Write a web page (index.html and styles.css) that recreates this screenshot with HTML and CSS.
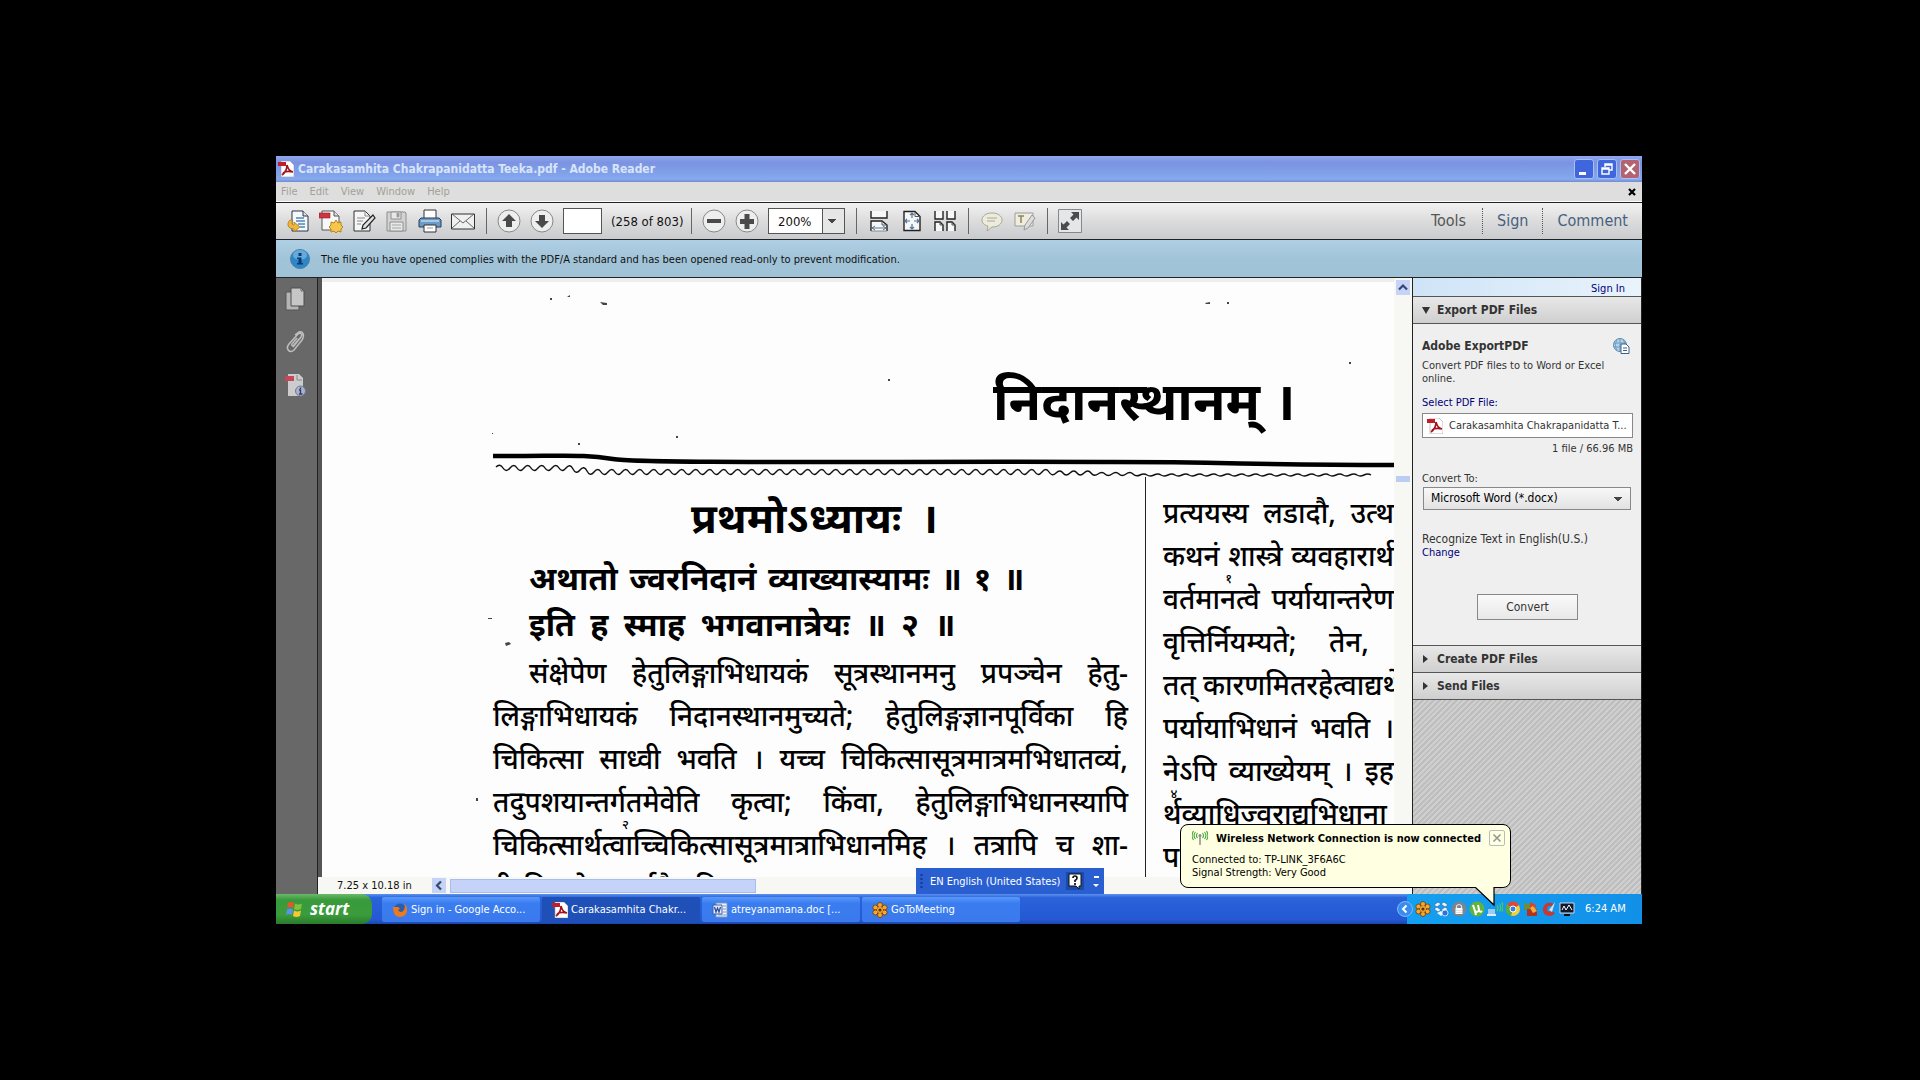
FILE: index.html
```html
<!DOCTYPE html>
<html lang="en">
<head>
<meta charset="utf-8">
<title>Carakasamhita Chakrapanidatta Teeka.pdf - Adobe Reader</title>
<link rel="stylesheet" href="styles.css">
</head>
<body>
<svg class="defs" aria-hidden="true">
  <symbol id="pdf" viewBox="0 0 16 16">
    <path d="M3 0h9l4 4v12H3z" fill="#fff" stroke="#999" stroke-width=".6"/>
    <path d="M0 1h8v4H0z" fill="#c11e2b"/>
    <path d="M9 4c1 4 2 6 6 7M9 4c0 4-1 7-5 10M5 12c3-2 6-2 10-1" fill="none" stroke="#a3121d" stroke-width="1.7"/>
  </symbol>
  <symbol id="flower" viewBox="0 0 16 16">
    <g fill="#f9a72b" stroke="#6b3a08" stroke-width=".8"><circle cx="8" cy="3" r="2.5"/><circle cx="8" cy="13" r="2.5"/><circle cx="3.4" cy="5.5" r="2.5"/><circle cx="12.6" cy="5.5" r="2.5"/><circle cx="3.4" cy="10.5" r="2.5"/><circle cx="12.6" cy="10.5" r="2.5"/></g>
    <circle cx="8" cy="8" r="3" fill="#f9a72b"/><circle cx="8" cy="8" r="1.6" fill="#5a2d05"/>
  </symbol>
</svg>
<div class="screen">
  <header class="titlebar">
    <svg class="i16"><use href="#pdf"/></svg>
    <h1>Carakasamhita Chakrapanidatta Teeka.pdf - Adobe Reader</h1>
    <div class="winbtns">
      <button aria-label="Minimize"><svg viewBox="0 0 18 18"><path d="M4 12h7v3H4z" fill="#fff"/></svg></button>
      <button aria-label="Restore"><svg viewBox="0 0 18 18"><path d="M7 7V4h7v6h-3M4 8h7v6H4zM4 9h7M7 5h7" fill="none" stroke="#fff" stroke-width="1.4"/></svg></button>
      <button class="close" aria-label="Close"><svg viewBox="0 0 18 18"><path d="M4 4l10 10M14 4L4 14" stroke="#fff" stroke-width="2.4"/></svg></button>
    </div>
  </header>
  <nav class="menubar">
    <button>File</button><button>Edit</button><button>View</button><button>Window</button><button>Help</button>
    <button class="docclose" aria-label="Close document"><svg viewBox="0 0 8 8"><path d="M1 1l6 6M7 1L1 7" stroke="#000" stroke-width="2.2"/></svg></button>
  </nav>
  <div class="toolbar">
    <button aria-label="Open"><svg viewBox="0 0 24 24"><path d="M6 2h11l5 5v15H6z" fill="#f6f9fc" stroke="#2d3743"/><path d="M17 2v5h5" fill="#dce4ec" stroke="#2d3743"/><path d="M10 9h8M10 12h9M12 15h7M14 18h5" stroke="#4d86b8" stroke-width="1.4"/><path d="M4 11c-4 4-2 9 4 9v3l6-5-6-5v3c-2 0-3-2-1-5z" fill="#f0b73c" stroke="#a8761a" stroke-width=".8"/></svg></button>
    <button aria-label="Create PDF"><svg viewBox="0 0 24 24"><path d="M3 2h12l5 5v14H3z" fill="#f8f8f8" stroke="#555"/><path d="M15 2v5h5" fill="#ddd" stroke="#555"/><path d="M0 4h11v5H0z" fill="#cf3540" stroke="#8e1c25" stroke-width=".6"/><path d="M17 11l2 3 3-1v3l2 2-2 2v3l-3-1-2 2-2-2-3 1v-3l-2-2 2-2v-3l3 1z" fill="#f6c74c" stroke="#b8831e"/></svg></button>
    <button aria-label="Edit"><svg viewBox="0 0 24 24"><path d="M2 2h11l5 5v15H2z" fill="#f6f6f6" stroke="#333"/><path d="M13 2v5h5M5 9h8M5 12h6M5 15h4" fill="none" stroke="#888"/><path d="M21 6l2 3-9 10-4 1 1-4z" fill="#e2e2e2" stroke="#222" stroke-width="1.2"/></svg></button>
    <button aria-label="Save" disabled><svg viewBox="0 0 24 24"><path d="M2 3h18l1 1v18H2z" fill="#d3d3d3" stroke="#8e8e8e"/><path d="M6 3h10v7H6zM5 13h13v9H5z" fill="#e8e8e8" stroke="#8e8e8e"/><path d="M12 4h2v4h-2zM7 16h9M7 19h9" fill="#8e8e8e" stroke="#a5a5a5"/></svg></button>
    <button aria-label="Print"><svg viewBox="0 0 24 24"><path d="M6 1h12v9H6z" fill="#fff" stroke="#333"/><path d="M3 9h18l2 2v7H1v-7z" fill="#6d9bc7" stroke="#263c55"/><path d="M3 12h18" stroke="#bdd6ec" stroke-width="1.5"/><path d="M6 16h12v7H6z" fill="#fff" stroke="#333"/><path d="M9 19h6" stroke="#999"/></svg></button>
    <button aria-label="Email"><svg viewBox="0 0 24 24"><path d="M.5 5h23v15H.5z" fill="#f0f0f0" stroke="#333"/><path d="M1 5l11 9L23 5M1 19l8-7M23 19l-8-7" fill="none" stroke="#666"/></svg></button>
    <span class="sep"></span>
    <button aria-label="Previous page"><svg viewBox="0 0 24 24"><circle cx="12" cy="12" r="11" fill="#eee" stroke="#888"/><path d="M12 5l7 7h-4v6H9v-6H5z" fill="#4a4a4a"/></svg></button>
    <button aria-label="Next page"><svg viewBox="0 0 24 24"><circle cx="12" cy="12" r="11" fill="#eee" stroke="#888"/><path d="M12 19l7-7h-4V6H9v6H5z" fill="#4a4a4a"/></svg></button>
    <input class="pageno" type="text" aria-label="Page number">
    <span class="count">(258 of 803)</span>
    <span class="sep"></span>
    <button aria-label="Zoom out"><svg viewBox="0 0 24 24"><circle cx="12" cy="12" r="11" fill="#eee" stroke="#888"/><path d="M5 10h14v4H5z" fill="#4a4a4a"/></svg></button>
    <button aria-label="Zoom in"><svg viewBox="0 0 24 24"><circle cx="12" cy="12" r="11" fill="#eee" stroke="#888"/><path d="M5 10h4.500V5h5v5H19v5h-4.500v5h-5v-5H5z" fill="#4a4a4a"/></svg></button>
    <select class="zoom" aria-label="Zoom level"><option>200%</option></select>
    <span class="sep"></span>
    <button aria-label="Fit width"><svg viewBox="0 0 24 24"><path d="M4 2v7h16V2M4 22V12h11l5 4v6" fill="#f7f7f7" stroke="#222" stroke-width="1.4"/><path d="M15 12v4h5" fill="none" stroke="#555"/><path d="M5 19h14M8 17l-3 2 3 2M16 17l3 2-3 2" fill="none" stroke="#54749b"/><path d="M4 22h16" stroke="#888"/></svg></button>
    <button aria-label="Fit page"><svg viewBox="0 0 24 24"><path d="M4 2.500h11l5 5v14H4z" fill="#f7f7f7" stroke="#222" stroke-width="1.4"/><path d="M15 2.500v5h5" fill="none" stroke="#555"/><path d="M12 4v5M12 15v5M5 12h5M14 12h5M10 6l2-2 2 2M10 18l2 2 2-2M7 10l-2 2 2 2M17 10l2 2-2 2" fill="none" stroke="#54749b" stroke-width="1.2"/></svg></button>
    <button aria-label="Two pages"><svg viewBox="0 0 24 24"><path d="M2 2v8h8V2M14 2v8h8V2M2 22v-9h5l3 3v6M14 22v-9h5l3 3v6" fill="#f7f7f7" stroke="#222" stroke-width="1.4"/><path d="M7 13v3h3M19 13v3h3" fill="none" stroke="#555"/></svg></button>
    <span class="sep"></span>
    <button aria-label="Comment" disabled><svg viewBox="0 0 24 24"><path d="M13 4c6 0 10 3 10 7s-4 7-10 7l-5 4 1-5c-4-1-6-3-6-6 0-4 4-7 10-7z" fill="#ecebdc" stroke="#aaa894"/><path d="M8 9h10M8 12h8" stroke="#aaa894"/></svg></button>
    <button aria-label="Highlight" disabled><svg viewBox="0 0 24 24"><path d="M3 4h18v13H3z" fill="#eeeddf" stroke="#9c9c9c"/><path d="M6 7h6M9 7v7" stroke="#8d875b" stroke-width="1.500"/><path d="M20 6l3 3-7 10-4 2 1-5z" fill="#ddd" stroke="#999"/></svg></button>
    <span class="sep"></span>
    <button aria-label="Full screen"><svg viewBox="0 0 24 24"><path d="M.5.5h23v23H.5z" fill="#e4e6ea" stroke="#888"/><path d="M21 3v8l-2.500-2.500L15 12l-3-3 3.500-3.500L13 3zM3 21v-8l2.500 2.500L9 12l3 3-3.500 3.500L11 21z" fill="#4c4c4c"/></svg></button>
    <div class="panes"><button class="on">Tools</button><button>Sign</button><button>Comment</button></div>
  </div>
  <div class="notice">
    <svg viewBox="0 0 20 20"><circle cx="10" cy="10" r="9.500" fill="#2f86c4" stroke="#4a7fa8"/><ellipse cx="10" cy="6" rx="7" ry="5" fill="#8cc3ea" opacity=".6"/><path d="M8.500 4h3v3h-3zM7 8.500h4.500V14H13v1.500H7V14h1.500v-4H7z" fill="#083a78"/></svg>
    <p>The file you have opened complies with the PDF/A standard and has been opened read-only to prevent modification.</p>
  </div>
  <main class="work">
    <aside class="rail">
      <button aria-label="Page thumbnails"><svg viewBox="0 0 22 24"><path d="M1 5h13v18H1z" fill="#b5b5b5" stroke="#555"/><path d="M6 1h10l3 3v15H6z" fill="#c6c6c6" stroke="#4f4f4f"/><path d="M16 1v3h3" fill="none" stroke="#666"/></svg></button>
      <button aria-label="Attachments"><svg viewBox="0 0 22 24"><path d="M8 17l8-10c2-3-1-5-3-3L4 14c-4 5 1 10 5 6l8-10c3-5 1-9-3-8L10 5M14 9l-5 6c-1 2-3 0-2-1l5-6" fill="none" stroke="#bdbdbd" stroke-width="1.500"/></svg></button>
      <button aria-label="Standards"><svg viewBox="0 0 22 24"><path d="M3 1h11l4 4v18H3z" fill="#ccc"/><path d="M12 2v5h5" fill="none" stroke="#888"/><path d="M0 3h9v5H0z" fill="#c4475a"/><circle cx="15.500" cy="18" r="5" fill="#a9b2cc" stroke="#6f7894"/><path d="M15.500 14.500v1.500M14 17h1.500v4M14 21h3.500" fill="none" stroke="#333c5c" stroke-width="1.300"/></svg></button>
    </aside>
    <section class="docarea">
      <div class="view">
        <article class="page" lang="sa">
          <svg class="specks" viewBox="0 0 1073 600" aria-hidden="true"><g fill="#444"><path d="M228 16h2v2h-2zM245 15l3-2v2zM278 20l7 1v2h-4zM566 97h2v2h-2zM170 151h1v1h-1zM256 161h2v2h-2zM354 154h2v2h-2zM883 21l5-1v2h-4zM905 20h2v2h-2zM1027 80h2v2h-2zM183 361l4-1 2 2-5 2zM166 336h4v1h-4zM154 516h2v3h-2z"/></g></svg>
          <h2>निदानस्थानम् ।</h2>
          <svg class="rule" viewBox="0 0 903 26" aria-hidden="true"><path d="M0 5C80 5 90 3 120 8S420 10 620 11C740 11 760 14 903 14" fill="none" stroke="#000" stroke-width="4.500"/><path d="M3 16q4-4 7 1t7 0t7 0t7 0t7 0t7 0t7 0t7 0t7 0t7 0t7 1t7 1t7 1t7 1t7 0t7 0t7 0t7 0t7 0t7 0t7 0t7 0t7 0t7 0t7 0t7 0t7 0t7 0t7 0t7 0t7 0t7 0t7 0t7 0t7 0t7 0t7 0t7 0t7 0t7 0t7 0t7 0t7 0t7 0t7 0t7 0t7 0t7 0t7 0t7 0t7 0t7 0t7 0t7 0t7 0t7 0t7 0t7 0t7 0t7 0t7 0t7 0t7 0t7 0t7 0t7 0t7 0t7 0t7 0t7 0t7 0t7 0t7 0t7 0t7 0t7 0t7 0t7 0t7 0t7 1t7 0t7 0t7 0t7 0t7 0t7 1t7 0t7 0t7 0t7 0t7 0t7 1t7 0t7 0t7 0t7 0t7 0t7 0t7 0t7 0t7 0t7 0t7 0t7 0t7 0t7 0t7 0t7 0t7 0t7 0t7 0t7 0t7 0t7 0t7 0t7 0t7 0t7 0t7 0t7 0t7 0t7 0t7 0t7 0t7 0" fill="none" stroke="#111" stroke-width="1.400"/></svg>
          <div class="cols">
            <div class="left">
              <h3>प्रथमोऽध्यायः ।</h3>
              <p class="verse v1">अथातो ज्वरनिदानं व्याख्यास्यामः ॥ १ ॥</p>
              <p class="verse v2">इति ह स्माह भगवानात्रेयः ॥ २ ॥</p>
              <div class="body">
                <p class="first">संक्षेपेण हेतुलिङ्गाभिधायकं सूत्रस्थानमनु प्रपञ्चेन हेतु-</p>
                <p>लिङ्गाभिधायकं निदानस्थानमुच्यते; हेतुलिङ्गज्ञानपूर्विका हि</p>
                <p>चिकित्सा साध्वी भवति । यच्च चिकित्सासूत्रमात्रमभिधातव्यं,</p>
                <p>तदुपशयान्तर्गतमेवेति कृत्वा; किंवा, हेतुलिङ्गाभिधानस्यापि</p>
                <p>चिकित्सार्थत्वा<span class="mark"><sup>२</sup></span>च्चिकित्सासूत्रमात्राभिधानमिह । तत्रापि च शा-</p>
                <p class="cut">रीरविमाने च सर्वत्रैव हि</p>
              </div>
            </div>
            <div class="right body">
              <p>प्रत्ययस्य लडादौ, उत्थ</p>
              <p>कथनं शास्त्रे व्यवहारार्थ</p>
              <p>वर्तमान<span class="mark"><sup>१</sup></span>त्वे पर्यायान्तरेण</p>
              <p class="short">वृत्तिर्नियम्यते; तेन,</p>
              <p>तत् कारणमितरहेत्वाद्यर्थे</p>
              <p>पर्यायाभिधानं भवति ।</p>
              <p>नेऽपि व्याख्येयम् । इह</p>
              <p>र्थ<span class="mark"><sup>४</sup></span>व्याधिज्वराद्यभिधाना</p>
              <p class="cut">प</p>
            </div>
          </div>
        </article>
        <div class="vscroll"><button aria-label="Scroll up"><svg viewBox="0 0 14 14"><path d="M3 9l4-4 4 4" fill="none" stroke="#35486f" stroke-width="2.200"/></svg></button><span class="thumb"></span></div>
      </div>
      <div class="status">
        <span class="dims">7.25 x 10.18 in</span>
        <button aria-label="Scroll left"><svg viewBox="0 0 14 14"><path d="M9 3L5 7l4 4" fill="none" stroke="#35486f" stroke-width="2.200"/></svg></button>
        <span class="hthumb"></span>
      </div>
    </section>
    <aside class="panel">
      <div class="signin"><a href="#">Sign In</a></div>
      <button class="acc open"><svg viewBox="0 0 8 8"><path d="M0 1h8L4 8z" fill="#333"/></svg>Export PDF Files</button>
      <div class="export">
        <div class="exhead"><h4>Adobe ExportPDF</h4><svg viewBox="0 0 17 16"><circle cx="7" cy="7" r="6.500" fill="#b4d4ee" stroke="#5c87ab"/><path d="M1 5h12M1 9h8M7 1v12M4 2c-2 4-2 7 0 10M10 2c1 1 2 3 2 4" fill="none" stroke="#6c98bd"/><path d="M8 6h5l3 3v6.500H8z" fill="#fff" stroke="#3a6289"/><path d="M10 10h4M10 12.500h4" stroke="#3a6289"/></svg></div>
        <p>Convert PDF files to to Word or Excel online.</p>
        <a class="sel" href="#">Select PDF File:</a>
        <div class="file"><svg class="i16"><use href="#pdf"/></svg>Carakasamhita Chakrapanidatta T...</div>
        <p class="size">1 file / 66.96 MB</p>
        <label for="fmt">Convert To:</label>
        <select id="fmt"><option>Microsoft Word (*.docx)</option></select>
        <p class="recog">Recognize Text in English(U.S.)</p>
        <a class="change" href="#">Change</a>
        <button class="convert">Convert</button>
      </div>
      <button class="acc"><svg viewBox="0 0 8 8"><path d="M1 0v8l5-4z" fill="#333"/></svg>Create PDF Files</button>
      <button class="acc"><svg viewBox="0 0 8 8"><path d="M1 0v8l5-4z" fill="#333"/></svg>Send Files</button>
      <div class="hatch"></div>
    </aside>
  </main>
  <footer class="taskbar">
    <button class="start"><svg viewBox="0 0 18 18"><path d="M2 3q3-2 6 0L7 8Q4 6 1 8z" fill="#e8542c"/><path d="M9 3.500q3 2 7 0L15 9q-4 2-7 0z" fill="#7fc23f"/><path d="M1 9.500q3-2 6 0L6 15q-3-2-6 0z" fill="#5a93ea"/><path d="M8 10.500q3 2 7 0L14 16q-4 2-7 0z" fill="#f6c92e"/></svg>start</button>
    <nav class="tasks">
      <button><svg class="i16" viewBox="0 0 16 16"><circle cx="8" cy="8" r="6.500" fill="#2b5da8"/><path d="M1 5c0 7 3 10 7 10s7-3 7-7c0-3-1-5-3-6 1 2 1 4 0 6-2 3-5 2-6 0l2-1-2-2-2 0z" fill="#ee7a1d"/></svg><span>Sign in - Google Acco...</span></button>
      <button class="active"><svg class="i16"><use href="#pdf"/></svg><span>Carakasamhita Chakr...</span></button>
      <button><svg class="i16" viewBox="0 0 16 16"><path d="M4 1h11v14H4z" fill="#f1f5fb" stroke="#7b96c4"/><path d="M11 4h3M11 7h3M11 10h3M6 13h8" stroke="#7b96c4"/><path d="M1 3h9v9H1z" fill="#e7eefb" stroke="#3a5fa5"/><path d="M2.500 5L4 10l1.500-4L7 10l1.500-5" fill="none" stroke="#2a4f9c" stroke-width="1.300"/></svg><span>atreyanamana.doc [...</span></button>
      <button><svg class="i16"><use href="#flower"/></svg><span>GoToMeeting</span></button>
    </nav>
    <div class="tray">
      <button class="expand" aria-label="Show hidden icons"><svg viewBox="0 0 16 16"><circle cx="8" cy="8" r="7.500" fill="#3a8df0" stroke="#7fb8fa"/><path d="M9.500 4.500L6 8l3.500 3.500" fill="none" stroke="#fff" stroke-width="2"/></svg></button>
      <svg class="i16"><use href="#flower"/></svg>
      <svg class="i16" viewBox="0 0 16 16"><path d="M5 1l3 2-4 3-3-2zM11 1l4 3-3 2-4-3zM1 8l3-2 4 3-3 2zM12 6l3 2-4 3-3-2z" fill="#e9f4ff" stroke="#1c5ea8" stroke-width=".6"/><path d="M4 12l4-2 3 2-3 3z" fill="#e9f4ff"/><circle cx="12" cy="12" r="3" fill="#2f72d8" stroke="#fff" stroke-width=".7"/></svg>
      <svg class="i16" viewBox="0 0 16 16"><circle cx="8" cy="8" r="7.500" fill="#7c848e"/><path d="M4.500 7h7v6h-7z" fill="#fff"/><path d="M5.500 7V5q2.500-3 5 0v2M5 9.500h6M5 11.500h6" fill="none" stroke="#dfe3e8" stroke-width="1.200"/></svg>
      <svg class="i16" viewBox="0 0 16 16"><circle cx="8" cy="8" r="7.500" fill="#62b33c"/><path d="M4 4l2 6q3 2 4-1L9 4M10 9q1 3 3 1M6 10l1 4" fill="none" stroke="#fff" stroke-width="2"/></svg>
      <svg class="i16" viewBox="0 0 16 16"><path d="M1 8h7v5H1z" fill="#9ecbf4"/><path d="M0 13h9v2H0z" fill="#dcecfb"/><path d="M10 4q2 3 0 6M12.500 2.500q2.500 4 0 8M15 1.500q2 5 0 9" fill="none" stroke="#4fd04a" stroke-width="1.200"/></svg>
      <svg class="i16" viewBox="0 0 16 16"><circle cx="8" cy="8" r="7" fill="#f3cf3a"/><path d="M8 8L2 4a7 7 0 0 1 12 0z" fill="#da4a35"/><path d="M8 8L2 4a7 7 0 0 0 4 11z" fill="#55a948"/><circle cx="8" cy="8" r="3" fill="#3c7de0" stroke="#fff"/></svg>
      <svg class="i16" viewBox="0 0 16 16"><path d="M1 2l6 1v6H1z" fill="#6b8e3c"/><path d="M7 1l6 3-1 5H7z" fill="#d8442a"/><path d="M4 8h10v7H4z" fill="#b23420"/><path d="M7 7l3-2 4 5-4 2z" fill="#f0b13b"/></svg>
      <svg class="i16" viewBox="0 0 16 16"><path d="M13 3Q5-1 2 7q-1 7 6 8 4 0 6-3l-4-2q-4 2-4-2 0-4 5-3z" fill="#c9382e"/><path d="M14 1L8 9l3 2z" fill="#d9dde5"/></svg>
      <svg class="i16" viewBox="0 0 16 16"><path d="M1 2h14v10H1z" fill="#111a2c" stroke="#cfd8e6"/><path d="M3 9l2-4 2 4 3-5 3 5" fill="none" stroke="#fff"/><path d="M5 14h6" stroke="#111" stroke-width="2"/></svg>
      <time>6:24 AM</time>
    </div>
  </footer>
  <div class="langbar"><span class="grip"></span><span>EN English (United States)</span><button aria-label="Help"><svg viewBox="0 0 18 18"><path d="M3 2h12v12h-2v3l-3-3H3z" fill="#fff" stroke="#111"/><path d="M7 6q0-2 2-2t2 2q0 1.500-2 2.500v1.500M9 11v2" fill="none" stroke="#111" stroke-width="1.700"/></svg></button><svg class="opts" viewBox="0 0 6 16"><path d="M1 3h5v2H1zM0 11h6l-3 3z" fill="#fff"/></svg></div>
  <div class="balloon" role="status">
    <svg class="i16" viewBox="0 0 16 16"><path d="M8 6v9" stroke="#8c8c8c" stroke-width="1.500"/><circle cx="8" cy="5.500" r="1.500" fill="#8c8c8c"/><path d="M5.500 3q-2 2.500 0 5M3.500 2q-3 3.500 0 7M1.500 1q-3 4.500 0 9M10.500 3q2 2.500 0 5M12.500 2q3 3.500 0 7M14.500 1q3 4.500 0 9" fill="none" stroke="#3fa53a" stroke-width="1.100"/></svg>
    <strong>Wireless Network Connection is now connected</strong>
    <button aria-label="Dismiss"><svg viewBox="0 0 16 16"><path d="M4 4l8 8M12 4l-8 8" stroke="#999" stroke-width="2"/></svg></button>
    <p>Connected to: TP-LINK_3F6A6C<br>Signal Strength: Very Good</p>
    <svg class="tail" viewBox="0 0 22 20"><path d="M1 0l19 18V0" fill="#ffffe1" stroke="#000" stroke-width="1.200"/><path d="M1.500 0h18v-2h-18z" fill="#ffffe1"/></svg>
  </div>
</div>
</body>
</html>
```
FILE: styles.css
```css
* { box-sizing: border-box; margin: 0; padding: 0; }
body {
  background: #000;
  padding: 156px 278px 156px 276px;
  font: 11px/13px "DejaVu Sans Condensed", "Noto Sans", sans-serif;
  color: #111;
}
.defs { position: absolute; width: 0; height: 0; }
button, input, select { font: inherit; color: inherit; border: 0; background: none; }
svg { display: block; flex: none; }
a { color: #00007c; text-decoration: none; }
.i16 { width: 16px; height: 16px; }

.screen {
  position: relative;
  display: flex;
  flex-direction: column;
  height: calc(100vh - 312px);
  min-height: 600px;
  overflow: hidden;
}

.titlebar {
  display: flex;
  align-items: center;
  gap: 4px;
  height: 26px;
  flex: none;
  padding: 0 2px;
  background: linear-gradient(#8fa8ee, #7b93e2 25%, #7f9fe8 60%, #86a9ee 90%, #7289cf);
}
.titlebar h1 { flex: 1; font-size: 12px; line-height: 16px; color: #d8e4f8; }
.winbtns { display: flex; gap: 3px; }
.winbtns button { width: 20px; height: 20px; border: 1px solid #a9bff5; border-radius: 3px; background: #3f66dc; }
.winbtns .close { background: #b4626f; }

.menubar {
  display: flex;
  align-items: center;
  gap: 12px;
  height: 20px;
  flex: none;
  padding: 0 6px 0 5px;
  background: #dedede;
  color: #a3a195;
  border-bottom: 1px solid #fff;
}
.docclose { margin-left: auto; }
.docclose svg { width: 8px; height: 8px; }

.toolbar {
  display: flex;
  align-items: center;
  gap: 9px;
  height: 38px;
  flex: none;
  padding: 0 10px;
  border-top: 1px solid #222;
  border-bottom: 1px solid #222;
  background: linear-gradient(#f2f2f2, #dcdcdd 50%, #c9cbce);
}
.toolbar > button, .toolbar > button svg { width: 24px; height: 24px; flex: none; }
.sep { width: 1px; height: 26px; margin: 0 1px 0 2px; background: #666; }
.pageno { width: 39px; height: 26px; background: #fff; border: 1px solid #555; }
.count { width: 69px; font-size: 13px; white-space: nowrap; }
.zoom {
  width: 77px;
  height: 26px;
  padding-left: 9px;
  appearance: none;
  font-size: 13px;
  border: 1px solid #555;
  background:
    conic-gradient(from -45deg at 50% 100%, #444 90deg, transparent 0) right 8px center / 8px 4px no-repeat,
    linear-gradient(90deg, #fff 53px, #555 53px, #555 54px, #e6e6e6 54px);
}
.panes { display: flex; margin-left: auto; font-size: 16px; line-height: 26px; color: #47617f; }
.panes button { padding: 0 14px; border-left: 1px dotted #555; }
.panes .on { padding-right: 16px; border: 0; color: #555; }
.panes button:last-child { padding-right: 4px; }

.notice {
  display: flex;
  align-items: center;
  gap: 11px;
  height: 38px;
  flex: none;
  padding: 1px 0 0 14px;
  border-bottom: 1px solid #222;
  background: linear-gradient(#b0cfe5, #a2c4d8 50%, #a0c2d6);
}
.notice svg { width: 20px; height: 20px; }

.work { display: flex; flex: 1; min-height: 0; }
.rail {
  display: flex;
  flex-direction: column;
  align-items: center;
  gap: 19px;
  width: 42px;
  flex: none;
  padding: 9px 1px 0 0;
  background: #686868;
  border-right: 1px solid #222;
}
.rail svg { width: 22px; height: 24px; }
.docarea { display: flex; flex: 1; flex-direction: column; min-width: 0; }
.view { display: flex; flex: 1; min-height: 0; border-left: 4px solid #555; }
.page {
  position: relative;
  flex: 1;
  min-width: 0;
  overflow: hidden;
  padding-left: 171px;
  background: #fdfdfd;
  border-top: 4px solid #eee;
  color: #000;
  font-family: "Noto Sans", "Noto Sans Devanagari", sans-serif;
}
.specks { position: absolute; left: 0; top: 0; width: 1073px; height: 600px; }
.page h2 { padding: 82px 0 15px 500px; font-size: 53px; line-height: 72px; white-space: nowrap; }
.rule { width: 903px; height: 26px; }
.cols { display: flex; }
.left { width: 653px; flex: none; padding: 16px 17px 0 0; border-right: 1px solid #222; }
.left h3 { font-size: 42px; line-height: 48px; margin: 0 190px 14px 198px; text-align-last: justify; white-space: nowrap; }
.verse { margin-left: 36px; font-size: 32px; font-weight: bold; line-height: 46px; text-align-last: justify; white-space: nowrap; }
.v1 { margin-right: 104px; }
.v2 { margin-right: 173px; }
.body { font-size: 28px; font-weight: 500; line-height: 43px; }
.left .body { margin-top: 4px; }
.body p { text-align-last: justify; white-space: nowrap; }
.body .first { padding-left: 36px; }
.body .cut { text-align-last: left; }
.mark { position: relative; }
.mark sup { position: absolute; right: 4px; top: -8px; font-size: 13px; line-height: 14px; }
.right { flex: 1; min-width: 0; padding: 14px 0 0 17px; }
.right .short { padding-right: 25px; }

.vscroll { display: flex; flex-direction: column; gap: 181px; width: 18px; flex: none; padding: 2px; background: #f7f7f3; }
.vscroll button, .vscroll button svg { width: 14px; height: 15px; background: #c5d3f9; }
.thumb { height: 6px; background: #bccdf3; }
.status { display: flex; align-items: center; gap: 4px; height: 17px; flex: none; background: #f7f7f3; }
.dims { width: 110px; padding-left: 19px; white-space: nowrap; }
.status button, .status button svg { width: 14px; height: 15px; background: #c5d3f9; }
.hthumb { width: 306px; height: 14px; background: #c5d3f9; border: 1px solid #a9bcee; }

.panel { display: flex; flex-direction: column; width: 230px; flex: none; border-left: 1px solid #222; border-right: 1px solid #222; background: #efefef; color: #333; }
.signin { height: 19px; flex: none; padding: 4px 16px 0; text-align: right; background: linear-gradient(90deg, #cfe4f7, #e9f3fb); border-bottom: 1px solid #555; }
.acc {
  display: flex;
  align-items: center;
  gap: 7px;
  height: 27px;
  flex: none;
  padding-left: 9px;
  border-bottom: 1px solid #555;
  font-size: 12px;
  font-weight: bold;
  background: linear-gradient(#e8e8e8, #cfcfcf);
}
.acc svg { width: 8px; height: 8px; }
.export { display: flex; flex-direction: column; height: 322px; flex: none; padding: 14px 8px 0 9px; border-bottom: 1px solid #555; }
.exhead { display: flex; justify-content: space-between; align-items: center; padding-right: 3px; margin-bottom: 5px; }
.exhead h4 { font-size: 12px; line-height: 16px; }
.exhead svg { width: 17px; height: 16px; }
.sel { margin: 11px 0 4px; }
.file { display: flex; align-items: center; gap: 6px; height: 25px; padding-left: 4px; border: 1px solid #888; background: #fff; white-space: nowrap; overflow: hidden; }
.size { margin-top: 4px; text-align: right; }
.export label { margin: 17px 0 2px; }
#fmt {
  width: 208px;
  height: 23px;
  padding-left: 7px;
  margin-left: 1px;
  appearance: none;
  border: 1px solid #888;
  color: #000;
  font-size: 12px;
  background:
    conic-gradient(from -45deg at 50% 100%, #444 90deg, transparent 0) right 8px center / 8px 4px no-repeat,
    linear-gradient(#f8f8f8, #e2e2e2);
}
.recog { margin-top: 23px; font-size: 12px; }
.change { margin-bottom: 35px; }
.convert { align-self: center; width: 101px; height: 26px; border: 1px solid #888; background: linear-gradient(#fafafa, #e8e8e8); font-size: 12px; }
.hatch { flex: 1; background: repeating-linear-gradient(135deg, #cfcfcf 0 2px, #bebebe 2px 4px); }

.taskbar { display: flex; height: 30px; flex: none; background: linear-gradient(#5d93f0, #2a63da 12%, #2458d4 85%, #1c46ae); color: #fff; }
.start {
  display: flex;
  align-items: center;
  gap: 6px;
  width: 96px;
  padding-left: 10px;
  border-radius: 0 10px 10px 0;
  background: linear-gradient(#6cb96a, #389a3a 20%, #3a9c3c 70%, #2a7a2c);
  font: italic bold 17px/20px "Open Sans", sans-serif;
}
.start svg { width: 18px; height: 18px; }
.tasks { display: flex; flex: 1; gap: 2px; padding: 3px 0 2px 10px; }
.tasks button { display: flex; align-items: center; gap: 3px; width: 158px; padding-left: 10px; border-radius: 2px; background: linear-gradient(#5a98fa, #3a7df0 25%, #3a79ec); }
.tasks .active { background: #1e50b8; }
.tray { display: flex; align-items: center; gap: 2px; width: 245px; padding-bottom: 1px; background: linear-gradient(90deg, transparent 10px, #14a0f0 10px, #1290e8); }
.tray svg { width: 16px; height: 16px; }
.tray time { margin-left: 8px; white-space: nowrap; }

.langbar { position: absolute; left: 640px; bottom: 30px; display: flex; align-items: center; gap: 6px; width: 188px; height: 26px; padding: 0 5px 0 3px; background: #2a5fd2; color: #fff; white-space: nowrap; }
.grip { width: 5px; height: 16px; background: radial-gradient(#1a3f9c 1px, transparent 2px) 0 0 / 5px 4px; }
.langbar button, .langbar button svg { width: 18px; height: 18px; background: #1c4aa8; }
.opts { width: 6px; height: 16px; margin-left: auto; }

.balloon {
  position: absolute;
  right: 131px;
  bottom: 36px;
  display: grid;
  grid-template-columns: 16px 1fr 16px;
  column-gap: 8px;
  row-gap: 7px;
  align-items: center;
  width: 331px;
  height: 64px;
  padding: 5px 5px 8px 11px;
  border: 1px solid #000;
  border-radius: 8px;
  background: #ffffe1;
  color: #000;
  white-space: nowrap;
}
.balloon button { border: 1px solid #bbb; border-radius: 2px; }
.balloon p { grid-column: 1 / -1; }
.tail { position: absolute; right: 14px; top: 62px; width: 22px; height: 20px; }
```
